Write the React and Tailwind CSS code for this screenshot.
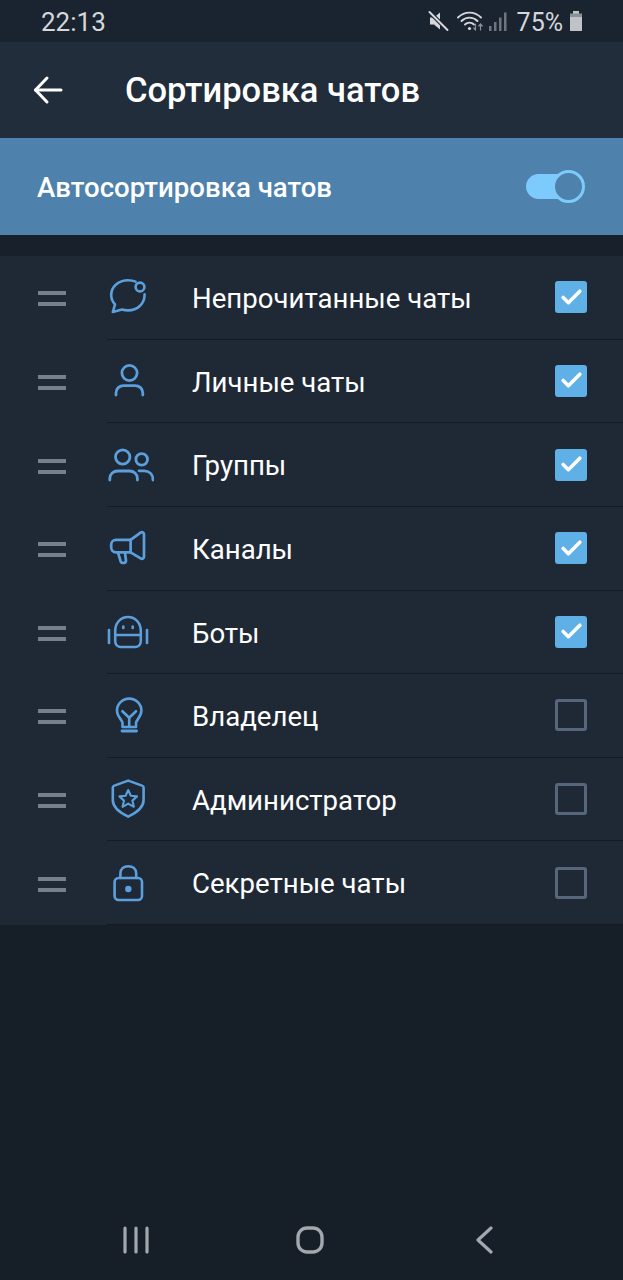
import { Check } from 'lucide-react';

const font = { fontFamily: 'Roboto, sans-serif' };

function ChatIcon() {
  return (
    <svg width="40" height="40" viewBox="0 0 40 40" fill="none" stroke="#5b9fdc" strokeWidth="2.6" strokeLinecap="round" strokeLinejoin="round">
      <path d="M26.6 4.6 C24.4 3.6 22 3.2 19 3.2 C9.6 3.2 2.2 9.6 2.2 18 C2.2 21.6 3.8 25 6 27.4 L3.8 35 L13 32.6 C15 33.2 17 33.4 19 33.4 C28.4 33.4 35.6 27 35.6 17.4" />
      <circle cx="31" cy="10" r="4.4" />
    </svg>
  );
}

function PersonIcon() {
  return (
    <svg width="40" height="40" viewBox="0 0 40 40" fill="none" stroke="#5b9fdc" strokeWidth="2.8" strokeLinecap="round">
      <circle cx="20.5" cy="12" r="7.6" />
      <path d="M7 34 V32 C7 27.6 10.4 24.6 14.8 24.6 H26 C30.4 24.6 33.8 27.6 33.8 32 V34" />
    </svg>
  );
}

function GroupIcon() {
  return (
    <svg width="50" height="40" viewBox="0 0 50 40" fill="none" stroke="#5b9fdc" strokeWidth="2.8" strokeLinecap="round" className="shrink-0">
      <circle cx="18.7" cy="12" r="7.2" />
      <circle cx="37.7" cy="14.4" r="5.8" />
      <path d="M5.8 35 V33.6 C5.8 29 9.4 26 13.8 26 H25.4 C29.8 26 33.4 29 33.4 33.6 V35" />
      <path d="M35 25.8 H40 C45 25.8 49 29 49 35" />
    </svg>
  );
}

function MegaphoneIcon() {
  return (
    <svg width="40" height="40" viewBox="0 0 40 40" fill="none" stroke="#5b9fdc" strokeWidth="2.7" strokeLinecap="round" strokeLinejoin="round">
      <path d="M21.6 11.8 L31.6 4.6 C33.2 3.6 35 4.6 35 6.6 V28.4 C35 30.4 33.2 31.4 31.6 30.4 L21.6 24.4" />
      <path d="M21.6 11.8 H7 C4.4 11.8 2.2 14 2.2 16.6 V19.6 C2.2 22.2 4.4 24.4 7 24.4 H21.6 Z" />
      <path d="M9 24.6 L11.6 33.2 C12.4 35.6 16.6 35.6 17 33 L16 24.6" />
    </svg>
  );
}

function BotIcon() {
  return (
    <svg width="44" height="40" viewBox="0 0 44 40" fill="none" stroke="#5b9fdc" strokeWidth="2.6" strokeLinecap="round" strokeLinejoin="round">
      <path d="M8.2 19 C8.2 11 13.6 5 21 5 C28.4 5 33.8 11 33.8 19 V29 C33.8 32.5 31.4 35 28 35 H14 C10.6 35 8.2 32.5 8.2 29 Z" />
      <path d="M8.2 23 H33.8" />
      <path d="M2 18 V31" />
      <path d="M40 18 V31" />
      <path d="M16.3 14.5 V16" />
      <path d="M25.7 14.5 V16" />
    </svg>
  );
}

function BulbIcon() {
  return (
    <svg width="40" height="40" viewBox="0 0 40 40" fill="none" stroke="#5b9fdc" strokeWidth="2.6" strokeLinecap="round" strokeLinejoin="round">
      <path d="M13.5 32 V28 C13.5 25 8 22 8 15.5 C8 9 13.4 3.6 20.2 3.6 C27 3.6 32.4 9 32.4 15.5 C32.4 22 27 25 27 28 V32 Z" />
      <path d="M13.4 16.2 L20.2 22.8 L27 16.2" />
      <path d="M20.2 22.8 V32" />
      <path d="M13 36 H27.6" strokeWidth="2.8" />
    </svg>
  );
}

function ShieldIcon() {
  return (
    <svg width="40" height="40" viewBox="0 0 40 40" fill="none" stroke="#5b9fdc" strokeWidth="2.6" strokeLinecap="round" strokeLinejoin="round">
      <path d="M19.2 1.6 L33 6.6 C34 7 34.6 7.6 34.6 8.6 V21 C34.6 28.4 27 34 19.2 37.6 C11.4 34 3.8 28.4 3.8 21 V8.6 C3.8 7.6 4.4 7 5.4 6.6 Z" />
      <path d="M19.2 11 L21.8 16.8 L28 17.4 L23.4 21.6 L24.8 27.8 L19.2 24.6 L13.6 27.8 L15 21.6 L10.4 17.4 L16.6 16.8 Z" strokeWidth="2.1" />
    </svg>
  );
}

function LockIcon() {
  return (
    <svg width="40" height="40" viewBox="0 0 40 40" fill="none" stroke="#5b9fdc" strokeWidth="2.6" strokeLinecap="round" strokeLinejoin="round">
      <rect x="5.6" y="15" width="27.4" height="22" rx="4" />
      <path d="M11.4 15 V10.6 C11.4 5.8 15 3.2 19.3 3.2 C23.6 3.2 27.2 5.8 27.2 10.6 V15" />
      <circle cx="19.3" cy="26" r="3.2" fill="#5b9fdc" stroke="none" />
    </svg>
  );
}

const rows = [
  { label: 'Непрочитанные чаты', icon: <ChatIcon />, on: true },
  { label: 'Личные чаты', icon: <PersonIcon />, on: true },
  { label: 'Группы', icon: <GroupIcon />, on: true },
  { label: 'Каналы', icon: <MegaphoneIcon />, on: true },
  { label: 'Боты', icon: <BotIcon />, on: true },
  { label: 'Владелец', icon: <BulbIcon />, on: false },
  { label: 'Администратор', icon: <ShieldIcon />, on: false },
  { label: 'Секретные чаты', icon: <LockIcon />, on: false },
];

function StatusBar() {
  return (
    <div className="h-[42px] bg-[#1a2430] flex items-center justify-between pl-[41px] pr-[39px] text-[#d5d7da]">
      <span className="text-[26px] leading-none pt-[2px]">22:13</span>
      <div className="flex items-center">
        <svg width="22" height="22" viewBox="0 0 22 22" fill="#d5d7da" className="mr-[7px]">
          <path d="M2 7.5 H6 L12 2.5 V19.5 L6 14.5 H2 Z" />
          <path d="M1.5 2 L19.5 20" stroke="#1a2430" strokeWidth="4" />
          <path d="M1.5 2 L19.5 20" stroke="#d5d7da" strokeWidth="2" strokeLinecap="round" />
        </svg>
        <svg width="28" height="22" viewBox="0 0 28 22" fill="none" stroke="#d5d7da" strokeWidth="1.9" strokeLinecap="round" className="mr-[2px]">
          <path d="M1 7.5 C7.5 1 17.5 1 24 7.5" />
          <path d="M4.5 11 C9 6.5 16 6.5 20.5 11" />
          <path d="M8 14.5 C10.5 12 14.5 12 17 14.5" />
          <circle cx="12.5" cy="18.5" r="1.6" fill="#d5d7da" stroke="none" />
          <path d="M18.5 14 V20 M16.8 18 L18.5 20 M23.5 20 V14 M21.8 16 L23.5 14 L25.2 16" strokeWidth="1.2" stroke="#8b9096" />
        </svg>
        <svg width="20" height="22" viewBox="0 0 20 22" fill="#6f757c" className="mr-[10px]">
          <rect x="2" y="16" width="2.5" height="5" />
          <rect x="7" y="12" width="2.5" height="9" />
          <rect x="12" y="7.5" width="2.5" height="13.5" />
          <rect x="17" y="2.5" width="2.5" height="18.5" />
        </svg>
        <span className="text-[25px] leading-none mr-[5px] pt-[2px]">75%</span>
        <svg width="16" height="22" viewBox="0 0 16 22" fill="#bfc2c6">
          <rect x="5" y="1" width="6" height="3" />
          <rect x="2" y="3.5" width="12" height="3.5" fill="#8b9096" />
          <rect x="2" y="7" width="12" height="14" />
        </svg>
      </div>
    </div>
  );
}

export default function App() {
  return (
    <div className="w-[623px] h-[1280px] bg-[#161e28] flex flex-col overflow-hidden" style={font}>
      <StatusBar />

      <div className="h-[96px] bg-[#212d3b] flex items-center pl-[33px]">
        <svg width="30" height="30" viewBox="0 0 30 30" fill="none" stroke="#ffffff" strokeWidth="3" strokeLinecap="round" strokeLinejoin="round">
          <path d="M2.5 15 H28" />
          <path d="M14 3 L2.5 15 L14 27" />
        </svg>
        <h1 className="ml-[62px] text-[34.5px] font-medium text-white leading-none">Сортировка чатов</h1>
      </div>

      <div className="h-[97px] bg-[#4f81ad] flex items-center justify-between pl-[37px] pr-[38px]">
        <span className="text-[27.6px] font-medium text-white pt-[2px]">Автосортировка чатов</span>
        <div className="relative w-[59px] h-[33px] flex items-center">
          <div className="w-[45px] h-[25px] rounded-full bg-[#7dcbfd]" />
          <div className="absolute right-0 top-0 w-[33px] h-[33px] rounded-full bg-[#4f81ad] border-[3px] border-[#7dcbfd]" />
        </div>
      </div>

      <div className="h-[21px] bg-[#18202b]" />

      <div className="bg-[#1f2936]">
        {rows.map((row) => (
          <div key={row.label} className="h-[83.625px] flex">
            <div className="w-[107px] shrink-0 flex flex-col justify-center gap-[7px] pl-[38px] pt-[2px]">
              <div className="w-[28px] h-[4px] bg-[#76808c]" />
              <div className="w-[28px] h-[4px] bg-[#76808c]" />
            </div>
            <div className="flex-1 flex items-center border-b border-[#141a23]">
              <div className="w-[44px] h-[40px] flex items-center justify-center">{row.icon}</div>
              <span className="ml-[41px] text-[27.6px] text-white flex-1 pt-[3px]">{row.label}</span>
              {row.on ? (
                <div className="w-[32px] h-[32px] mr-[36px] rounded-[3px] bg-[#5fb0e6] flex items-center justify-center">
                  <Check size={25} color="#ffffff" strokeWidth={3.4} />
                </div>
              ) : (
                <div className="w-[32px] h-[32px] mr-[36px] rounded-[3px] border-[3px] border-[#56677c]" />
              )}
            </div>
          </div>
        ))}
      </div>

      <div className="flex-1" />

      <div className="h-[80px] flex items-center pl-[122px]">
        <svg width="28" height="28" viewBox="0 0 28 28" fill="none" stroke="#a3a8af" strokeWidth="3.2" strokeLinecap="round">
          <path d="M3 2 V26 M14 2 V26 M25 2 V26" />
        </svg>
        <svg width="28" height="28" viewBox="0 0 28 28" fill="none" stroke="#a3a8af" strokeWidth="3.4" className="ml-[146px]">
          <rect x="2" y="2" width="24" height="24" rx="9" />
        </svg>
        <svg width="20" height="28" viewBox="0 0 20 28" fill="none" stroke="#a3a8af" strokeWidth="3.2" strokeLinecap="round" strokeLinejoin="round" className="ml-[151px]">
          <path d="M16 2 L3 14 L16 26" />
        </svg>
      </div>
    </div>
  );
}
